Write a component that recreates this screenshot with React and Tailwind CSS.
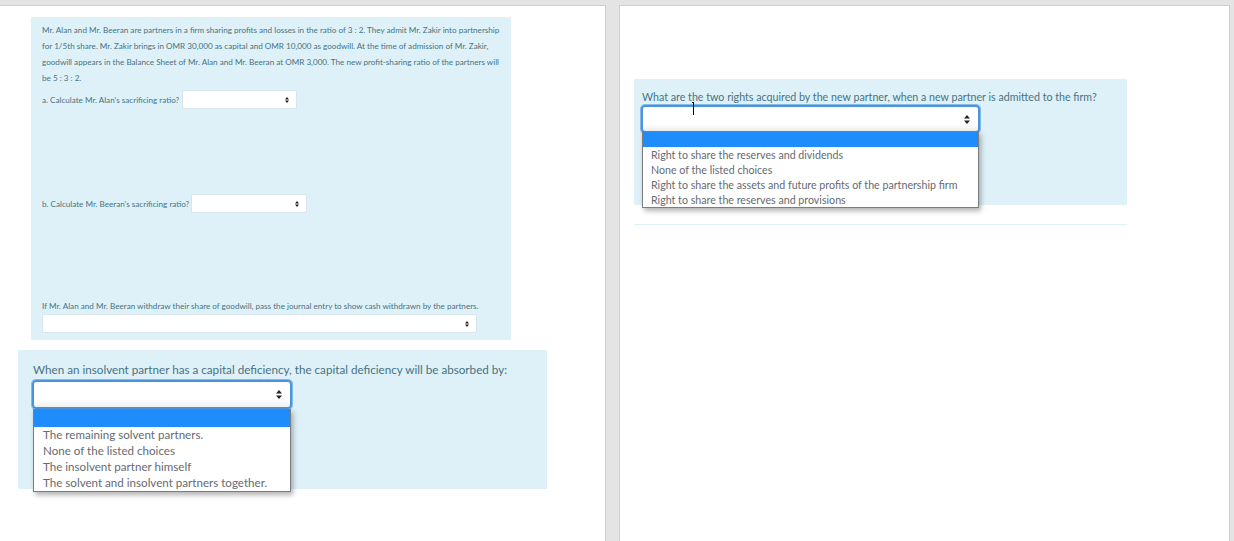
import React from "react";

const font = { fontFamily: 'Lato, "Open Sans", sans-serif' };

// Up/down arrows of the native select
function SelectArrows({ className = "" }) {
  return (
    <svg width="6" height="9" viewBox="0 0 6 9" className={className}>
      <path d="M3 0 L6 3.6 L0 3.6 Z M3 9 L6 5.4 L0 5.4 Z" fill="#222" />
    </svg>
  );
}

function SmallSelect({ className = "" }) {
  return (
    <div className={`flex h-[19px] items-center justify-end rounded-[2px] border border-[#d8e6ec] bg-white pr-[7px] ${className}`}>
      <SelectArrows className="h-[6px] w-[4px]" />
    </div>
  );
}

function OpenSelect({ options, boxClass, menuClass, rowClass, blankClass }) {
  return (
    <div className={`relative ${boxClass}`}>
      <div className="flex h-full items-center justify-end rounded-[4px] border-[2px] border-[#4a94dc] bg-gradient-to-b from-white from-70% to-[#f0f0f0] pr-[8px] shadow-[0_0_0_1px_rgba(74,148,220,0.6)]">
        <SelectArrows />
      </div>
      <div className={`absolute border border-[#7d7d7d] bg-white shadow-[2px_3px_5px_rgba(0,0,0,0.3)] ${menuClass}`}>
        <div className={`bg-[#1e8cfa] ${blankClass}`} />
        {options.map((o) => (
          <div key={o} className={`whitespace-nowrap text-[#666a70] ${rowClass}`}>{o}</div>
        ))}
      </div>
    </div>
  );
}

export default function App() {
  return (
    <div style={font} className="flex h-[541px] w-[1234px] overflow-hidden bg-[#e4e4e4] pr-[4px] pt-[5px] text-[#477282]">
      {/* Left sheet */}
      <div className="h-[536px] w-[606px] border-r border-t border-[#cfcfcf] bg-white pt-[11px]">
        <div className="ml-[31px] h-[323px] w-[480px] bg-[#def1f8] pl-[11px] pt-[5px] text-[8.12px] leading-[16px]">
          <p className="w-[462px]">
            <span className="block whitespace-nowrap">Mr. Alan and Mr. Beeran are partners in a firm sharing profits and losses in the ratio of 3 : 2. They admit Mr. Zakir into partnership</span>
            <span className="block whitespace-nowrap">for 1/5th share. Mr. Zakir brings in OMR 30,000 as capital and OMR 10,000 as goodwill. At the time of admission of Mr. Zakir,</span>
            <span className="block whitespace-nowrap">goodwill appears in the Balance Sheet of Mr. Alan and Mr. Beeran at OMR 3,000. The new profit-sharing ratio of the partners will</span>
            <span className="block whitespace-nowrap">be 5 : 3 : 2.</span>
          </p>
          <div className="mt-[4px] flex items-center">
            <span className="w-[140px] whitespace-nowrap">a. Calculate Mr. Alan's sacrificing ratio?</span>
            <SmallSelect className="w-[115px]" />
          </div>
          <div className="mt-[85px] flex items-center">
            <span className="w-[149px] whitespace-nowrap">b. Calculate Mr. Beeran's sacrificing ratio?</span>
            <SmallSelect className="w-[116px]" />
          </div>
          <div className="mt-[86px] whitespace-nowrap leading-[15px]">If Mr. Alan and Mr. Beeran withdraw their share of goodwill, pass the journal entry to show cash withdrawn by the partners.</div>
          <SmallSelect className="w-[435px]" />
        </div>

        <div className="ml-[18px] mt-[10px] h-[139px] w-[529px] rounded-bl-[2px] bg-[#def1f8] pl-[14px] pt-[10px] text-[11.66px]">
          <div className="ml-[1px] h-[20px] whitespace-nowrap leading-[19px]">When an insolvent partner has a capital deficiency, the capital deficiency will be absorbed by:</div>
          <OpenSelect
            boxClass="h-[29px] w-[260px]"
            menuClass="left-[1px] top-[29px] w-[258px]"
            blankClass="h-[17px]"
            rowClass="pl-[9px] text-[11.6px] leading-[16px]"
            options={[
              "The remaining solvent partners.",
              "None of the listed choices",
              "The insolvent partner himself",
              "The solvent and insolvent partners together.",
            ]}
          />
        </div>
      </div>

      {/* Right sheet */}
      <div className="relative ml-[13px] h-[536px] w-[611px] border-x border-t border-[#cfcfcf] bg-white pt-[73px]">
        <div className="ml-[14px] h-[126px] w-[493px] bg-[#def1f8] pl-[7px] pt-[9px] text-[10.68px]">
          <div className="ml-[1px] h-[17px] whitespace-nowrap leading-[17px]">What are the two rights acquired by the new partner, when a new partner is admitted to the firm?</div>
          <OpenSelect
            boxClass="h-[28px] w-[339px]"
            menuClass="left-[1px] top-[26px] w-[337px]"
            blankClass="h-[15px]"
            rowClass="pl-[8px] text-[10.66px] leading-[15px]"
            options={[
              "Right to share the reserves and dividends",
              "None of the listed choices",
              "Right to share the assets and future profits of the partnership firm",
              "Right to share the reserves and provisions",
            ]}
          />
        </div>
        <div className="ml-[14px] mt-[19px] h-px w-[493px] bg-[#dff1f8]" />
        {/* Text cursor left in the screenshot */}
        <div className="absolute left-[73px] top-[96px] h-[13px] w-px bg-black" />
        <div className="absolute left-[72px] top-[96px] h-px w-[2px] bg-black" />
      </div>
    </div>
  );
}
